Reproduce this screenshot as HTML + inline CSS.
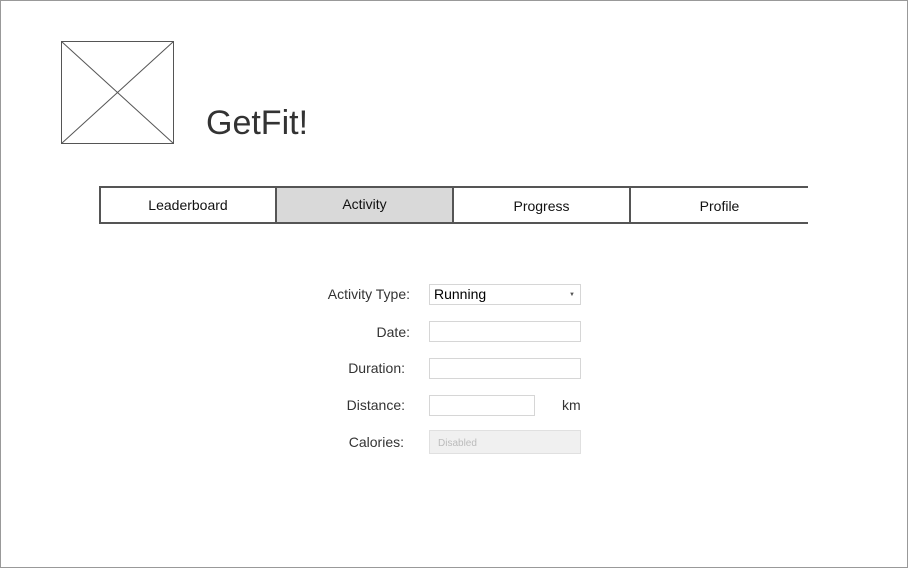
<!DOCTYPE html>
<html><head><style>
body{margin:0;width:908px;height:568px;position:relative;font-family:"Liberation Sans",Arial,sans-serif;background:#fff;overflow:hidden}
.abs{position:absolute}
.frame{left:0;top:0;width:906px;height:566px;border:1px solid #999}
.tab{top:186px;height:34px;border-top:2px solid #555;border-bottom:2px solid #555;font-size:14px;color:#111;text-align:center;line-height:34px}
.lbl{font-size:14px;color:#333;text-align:right}
.inp{left:429px;border:1px solid #d6d6d6;background:#fff;box-sizing:border-box}
</style></head><body>
<div class="abs frame"></div>
<svg class="abs" style="left:61px;top:41px" width="114" height="104"><rect x="0.5" y="0.5" width="112" height="102" fill="#fff" stroke="#555"/><line x1="0.5" y1="0.5" x2="112.5" y2="102.5" stroke="#555"/><line x1="112.5" y1="0.5" x2="0.5" y2="102.5" stroke="#555"/></svg>
<div class="abs" style="left:206px;top:104px;font-size:34px;color:#333">GetFit!</div>
<div class="abs tab" style="left:99px;width:174px;border-left:2px solid #555;border-right:2px solid #555">Leaderboard</div>
<div class="abs tab" style="left:277px;width:175px;background:#d9d9d9;border-right:2px solid #555;line-height:33px">Activity</div>
<div class="abs tab" style="left:454px;width:175px;border-right:2px solid #555;line-height:36px">Progress</div>
<div class="abs tab" style="left:631px;width:177px;line-height:36px">Profile</div>
<div class="abs lbl" style="left:300px;width:110px;top:286px">Activity Type:</div>
<div class="abs lbl" style="left:300px;width:110px;top:324px">Date:</div>
<div class="abs lbl" style="left:300px;width:105px;top:360px">Duration:</div>
<div class="abs lbl" style="left:300px;width:105px;top:397px">Distance:</div>
<div class="abs lbl" style="left:300px;width:104px;top:434px">Calories:</div>
<div class="abs inp" style="top:284px;width:152px;height:21px;font-size:14px;color:#000;padding:1px 0 0 4px">Running<span class="abs" style="right:5px;top:7px;font-size:6px;color:#555">▼</span></div>
<div class="abs inp" style="top:321px;width:152px;height:21px"></div>
<div class="abs inp" style="top:358px;width:152px;height:21px"></div>
<div class="abs inp" style="top:395px;width:106px;height:21px"></div>
<div class="abs" style="left:562px;top:397px;font-size:14px;color:#333">km</div>
<div class="abs inp" style="top:430px;width:152px;height:24px;background:#f0f0f0;border-color:#e0e0e0;font-size:10px;color:#bbb;padding:7px 0 0 8px">Disabled</div>
</body></html>
